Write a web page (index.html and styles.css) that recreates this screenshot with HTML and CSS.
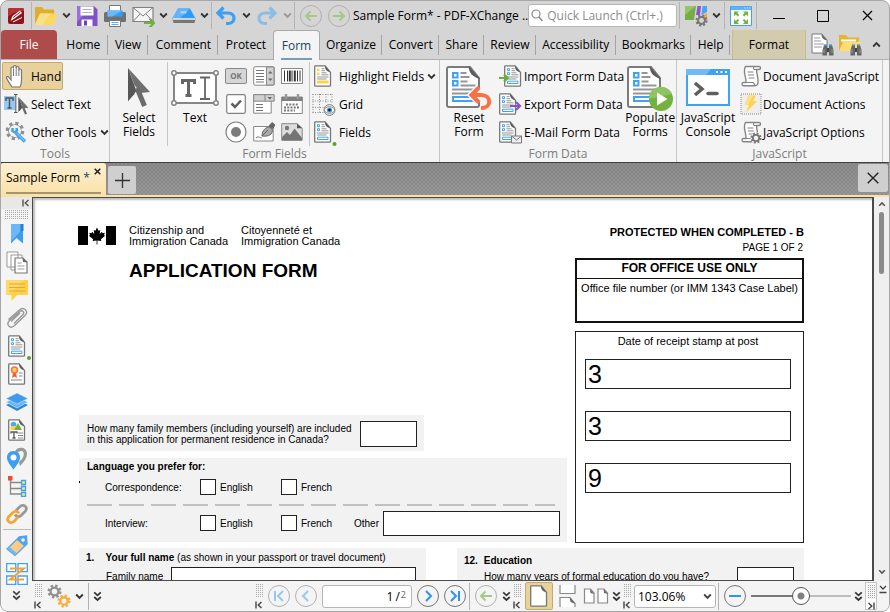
FILE: index.html
```html
<!DOCTYPE html>
<html lang="en">
<head>
    <meta charset="UTF-8">
    <meta name="viewport" content="width=device-width, initial-scale=1.0">
    <title>Sample Form* - PDF-XChange</title>
    <link rel="stylesheet" href="styles.css">
</head>
<body>
    <!-- Shared icons -->
    <svg class="sprite" aria-hidden="true">
        <symbol id="chevron" viewBox="0 0 9 7"><path d="M1.2 1.5l3.3 3.3 3.3-3.3" fill="none" stroke="currentColor" stroke-width="1.9"/></symbol>
        <symbol id="double" viewBox="0 0 9 11"><path d="M1.2 1.3l3.3 3 3.3-3M1.2 6l3.3 3 3.3-3" fill="none" stroke="currentColor" stroke-width="1.7"/></symbol>
        <symbol id="collapse" viewBox="0 0 8 8"><path d="M1 .5v7M6.5 1L3.2 4l3.3 3" fill="none" stroke="currentColor" stroke-width="1.4"/></symbol>
        <symbol id="doc" viewBox="0 0 22 22">
            <path d="M3.5.8h9.7l5.3 6.6v13.1q0 .7-.7.7H3.5q-.8 0-.8-.7V1.5q0-.7.8-.7z" fill="#fff" stroke="#777" stroke-width="1.3"/>
            <path d="M12.8.6c.2 4 2 6 5.7 7z" fill="#5c5c5c"/>
        </symbol>
        <symbol id="form" viewBox="0 0 22 22">
            <use href="#doc"/>
            <path d="M5.5 3.7h2v2h-2zM5.5 7.7h2v2h-2zM5.5 16.2H16v2.3H5.5z" fill="#fff" stroke="#3fa3f4"/>
            <path d="M9.5 3.7h3M9.5 5.7H13M9.5 7.8h5M9.5 9.8h7M5 12h11.5M5 14h9.5" stroke="#959595"/>
        </symbol>
        <!-- Larger form page for the tall ribbon buttons -->
        <symbol id="form-big" viewBox="0 0 36 44">
            <path d="M3 2h21l9 11v27q0 2-2 2H3q-2 0-2-2V4q0-2 2-2z" fill="#fff" stroke="#7b7b7b" stroke-width="2"/>
            <path d="M22.5 1c.5 7 4 11 11.5 13z" fill="#5c5c5c"/>
            <path d="M7 8h4.5v4.5H7zM7 16h4.5v4.5H7zM7 32h20v4H7z" fill="#fff" stroke="#3fa3f4" stroke-width="2"/>
            <path d="M14.5 8h6M14.5 12h9M14.5 16.5h7M14.5 20.5h15M6 24.5h24M6 28.5h20" stroke="#959595" stroke-width="1.8"/>
        </symbol>
        <symbol id="gear" viewBox="0 0 22 22">
            <circle cx="11" cy="11" r="8.5" fill="none" stroke="currentColor" stroke-width="3.5" stroke-dasharray="3.5 3.176"/>
            <circle cx="11" cy="11" r="5.8" fill="none" stroke="currentColor" stroke-width="3.4"/>
        </symbol>
        <symbol id="scroll" viewBox="0 0 22 22">
            <path d="M6 1.5h13c2 0 2 3 0 3h-2.5c0 5 2 8 1.5 13-.2 2-1.5 3.2-3 3.2H3.5c-2 0-2-3.2 0-3.2H6c.5-4-2-8-1.5-12.5C4.7 2.5 5 1.5 6 1.5z" fill="#fff" stroke="#858585" stroke-width="1.4"/>
            <path d="M16.5 4.5h-2c-1-.3-1.3-1.5-.5-3M6 17.5h7c1.5.5 1.3 2.5 2 3.2M7.5 7h6M8 10h6M8.5 13h6" fill="none" stroke="#858585" stroke-width="1.2"/>
        </symbol>
        <symbol id="binoculars" viewBox="0 0 12 12">
            <path d="M2 1h3v10.5H.5V6zM10 1H7v10.5h4.5V6z" fill="#666"/><path d="M5 4h2v4H5z" fill="#444"/><path d="M2 1h3M7 1h3" stroke="#44a3ee" stroke-width="1.5"/><path d="M2 5v4M10 5v4" stroke="#999"/>
        </symbol>
        <symbol id="arrow" viewBox="0 0 22 22"><path d="M17 11H6M10.5 6.5L6 11l4.5 4.5" fill="none" stroke="currentColor" stroke-width="2"/></symbol>
        <symbol id="cursor" viewBox="0 0 24 40"><path d="M1 0v33l6.5-7z" fill="#4e4e4e"/><path d="M1 0l22 24-9.5 1-6-8z" fill="#707070"/><path d="M1 0l8.5 23L1 33z" fill="#575757"/><path d="M10 20l7.5 18" stroke="#6b6b6b" stroke-width="5"/></symbol>
    </svg>

    <div class="app">
        <header class="titlebar">
            <button class="tool app-button" aria-label="PDF-XChange">
                <svg width="16" height="16" viewBox="0 0 16 16"><rect width="16" height="16" rx="2" fill="#8f1218"/><path d="M0 9V2q0-2 2-2h12q2 0 2 2v1C10 3 4 5 0 9z" fill="#bb3038"/><path d="M2.5 13l2-5L12 2.5l2 2.5-7.500 5.500z" fill="#fff"/><path d="M5 9.500L12.500 4M4 14l10-5.500" fill="none" stroke="#9a1c22"/><path d="M5 14l9-4.500" stroke="#fff"/></svg>
            </button>
            <span class="sep"></span>
            <button class="tool" aria-label="Open">
                <svg width="24" height="20" viewBox="0 0 24 20"><path d="M1 19V2q0-1 1-1h6l2 2.500h10V8z" fill="#dfae31"/><path d="M1 19l5-11.500h17L19.500 19z" fill="#ffd75b"/><path d="M1 19l5-11.500h11L8 19z" fill="#fbe08a"/></svg>
            </button>
            <button class="drop" aria-label="Open options"><svg width="9" height="7"><use href="#chevron"/></svg></button>
            <button class="tool" aria-label="Save">
                <svg width="22" height="22" viewBox="0 0 22 22"><path d="M1 1h17l3.500 3.500V21H1z" fill="#8152c4"/><path d="M1 1h16L1 17z" fill="#9a72d6"/><path d="M4.500 1.500h13v9h-13z" fill="#fff"/><path d="M6.500 4.500h9M6.500 7.500h9" stroke="#b9a5dc"/><path d="M5.500 14.500h11V21h-11z" fill="#fff"/><path d="M8 15.500h3v5H8z" fill="#6e46aa"/></svg>
            </button>
            <button class="tool" aria-label="Print">
                <svg width="22" height="22" viewBox="0 0 22 22"><rect y="7" width="22" height="10" rx="1.5" fill="#707070"/><path d="M5.500.5h11V8h-11zM5.500 15.500h11v6h-11z" fill="#fff" stroke="#777"/><path d="M3.500 5.500h15v6h-15z" fill="#2fa0f7"/><path d="M3.500 5.500h15L8 11.500H3.500z" fill="#6db9f7"/><path d="M7.500 17.500h7M7.500 19.500h7" stroke="#61aef0"/></svg>
            </button>
            <button class="tool" aria-label="E-mail">
                <svg width="23" height="22" viewBox="0 0 23 22"><path d="M1 2.500h20v14H1z" fill="#f5f5f5" stroke="#808080" stroke-width="1.2"/><path d="M1 2.500l10 8.500 10-8.500M1 16.500l7-7.500M21 16.500L14 9" fill="none" stroke="#808080"/><path d="M12 18h9M17.500 13.500L22 18l-4.500 4.500" fill="none" stroke="#70b03b" stroke-width="2.2"/></svg>
            </button>
            <button class="drop" aria-label="E-mail options"><svg width="9" height="7"><use href="#chevron"/></svg></button>
            <button class="tool" aria-label="Scan">
                <svg width="24" height="18" viewBox="0 0 24 18"><path d="M6 1.500h12l5.500 10H.5z" fill="#2d9cf4"/><path d="M6 1.500h12L8 11.500H.5z" fill="#62b3f7"/><path d="M9 4h6l-1 2.500H8z" fill="#a3d2fa"/><path d="M.5 11.500h23l-1 4.500h-21z" fill="#777"/><path d="M1 12h22" stroke="#eee" stroke-width="1.5"/></svg>
            </button>
            <button class="drop" aria-label="Scan options"><svg width="9" height="7"><use href="#chevron"/></svg></button>
            <span class="sep"></span>
            <button class="tool" aria-label="Undo">
                <svg width="22" height="20" viewBox="0 0 22 20"><path d="M8.500 1.500L3 7l5.500 5.500M3.500 7H13c8 0 8 10.500 0 10.500h-2" fill="none" stroke="#3b9ff2" stroke-width="3.2"/></svg>
            </button>
            <button class="drop" aria-label="Undo options"><svg width="9" height="7"><use href="#chevron"/></svg></button>
            <button class="tool" aria-label="Redo">
                <svg width="22" height="20" viewBox="0 0 22 20"><path d="M13.500 1.500L19 7l-5.500 5.500M18.500 7H9C1 7 1 17.500 9 17.500h2" fill="none" stroke="#8dbde6" stroke-width="3.2"/></svg>
            </button>
            <button class="drop faded" aria-label="Redo options"><svg width="9" height="7"><use href="#chevron"/></svg></button>
            <span class="sep"></span>
            <div class="history">
                <button class="round green" aria-label="Back"><svg width="22" height="22"><use href="#arrow"/></svg></button>
                <button class="round green" aria-label="Forward"><svg class="flip" width="22" height="22"><use href="#arrow"/></svg></button>
            </div>
            <div class="window-title">Sample Form* - PDF-XChange ..</div>
            <label class="search">
                <svg width="12" height="13" viewBox="0 0 12 13"><circle cx="5" cy="5" r="4" fill="none" stroke="#888" stroke-width="1.2"/><path d="M8 8l3.500 4" stroke="#888" stroke-width="1.5"/></svg>
                <input type="text" placeholder="Quick Launch (Ctrl+.)" aria-label="Quick Launch">
            </label>
            <span class="sep"></span>
            <div class="title-tools">
                <button class="tool" aria-label="UI options">
                    <svg width="24" height="22" viewBox="0 0 24 22"><path d="M1 1h11l-2 14H1z" fill="#76ad47"/><path d="M1 1h11L1 10z" fill="#93c569"/><path d="M13.500 1H17l-1 9h-4z" fill="#8b55cf"/><path d="M18.500 1H23v6l-5.500 3z" fill="#4aa4f2"/><path d="M17 12l6-4v7z" fill="#f8a43c"/><svg x="11" y="9" width="13" height="13" color="#777"><use href="#gear"/></svg></svg>
                </button>
                <button class="drop" aria-label="UI options menu"><svg width="9" height="7"><use href="#chevron"/></svg></button>
            </div>
            <span class="sep"></span>
            <div class="title-tools">
                <button class="tool" aria-label="Full screen">
                    <svg width="22" height="20" viewBox="0 0 22 20"><path d="M.5.5h21v19H.5z" fill="#fff" stroke="#3fa3f4"/><path d="M1 .5h20V4H1z" fill="#5eb2f6"/><path d="M14.500 2h1M17 2h1M19.500 2h1" stroke="#fff"/><path d="M4 5.500h5L7.300 7l2 2-1.500 1.500-2-2L4 10.500zM18 5.500h-5L14.700 7l-2 2 1.500 1.500 2-2 1.800 2zM4 18h5l-1.700-1.700 2-2-1.500-1.300-2 2L4 13zM18 18h-5l1.700-1.700-2-2 1.500-1.300 2 2L18 13z" fill="#72b23d"/></svg>
                </button>
            </div>
            <span class="sep"></span>
            <div class="window-buttons">
                <button aria-label="Minimize"><svg width="12" height="12"><path d="M0 8.500h12" stroke="#000"/></svg></button>
                <button aria-label="Maximize"><svg width="12" height="12"><path d="M.5.5h11v11H.5z" fill="none" stroke="#000"/></svg></button>
                <button aria-label="Close"><svg width="11" height="11"><path d="M1 1l9 9M10 1l-9 9" stroke="#000" stroke-width="1.2"/></svg></button>
            </div>
        </header>

        <nav class="tabs">
            <button class="file-tab">File</button>
            <button class="roomy">Home</button>
            <button class="roomy">View</button>
            <button class="roomy">Comment</button>
            <button class="roomy last">Protect</button>
            <button class="roomy active"><span>Form</span></button>
            <button>Organize</button>
            <button>Convert</button>
            <button>Share</button>
            <button>Review</button>
            <button>Accessibility</button>
            <button>Bookmarks</button>
            <button>Help</button>
            <button class="format-tab">Format</button>
            <div class="tab-tools">
                <button class="tool" aria-label="Find">
                    <svg width="24" height="23" viewBox="0 0 24 23"><path d="M2 1h10l5 6v13H2z" fill="#fff" stroke="#777"/><path d="M11.500 1c0 4 2 6 5.500 6z" fill="#666"/><path d="M4 5h6M4 8h7M4 11h10M4 14h8" stroke="#999"/><svg x="12" y="11" width="12" height="12"><use href="#binoculars"/></svg></svg>
                </button>
                <button class="tool" aria-label="Search in folder">
                    <svg width="24" height="23" viewBox="0 0 24 23"><path d="M1 18V2h7l2 2.500h11V8z" fill="#e7b432"/><path d="M3 7.500h15" stroke="#fff" stroke-width="2"/><path d="M1 18L5 9h18l-3 9z" fill="#ffdd74"/><svg x="12" y="11" width="12" height="12"><use href="#binoculars"/></svg></svg>
                </button>
                <button class="drop" aria-label="Collapse ribbon"><svg class="upside" width="9" height="7"><use href="#chevron"/></svg></button>
            </div>
        </nav>

        <section class="ribbon">
            <div class="group group-tools">
                <div class="group-body">
                    <div class="rows">
                        <button class="row-button selected">
                            <svg width="24" height="24" viewBox="-1 0 24 24"><path d="M7 23c-2-3-4-6-5.500-9-.5-1.500 1.500-2 2.500-.5L6 16V4.500c0-2 2.500-2 2.500 0V3c0-2 2.700-2 2.700 0v1c0-2 2.700-2 2.700 0v2.500c0-2 2.600-2 2.600 0V16c0 3-.5 5-1.500 7z" fill="#fff" stroke="#777" stroke-width="1.2"/><path d="M8.500 5v7M11.200 4v8M13.900 6v6" stroke="#777"/></svg>
                            Hand
                        </button>
                        <button class="row-button">
                            <svg width="24" height="22" viewBox="0 0 24 22"><path d="M0 3h11v14H0z" fill="#92caf8"/><path d="M2 8V5h7v3M5.500 5v10M3.500 15h4" fill="none" stroke="#555" stroke-width="1.5"/><path d="M10 1.500h3.500M10 19.500h3.500M11.800 1.500v18" stroke="#555"/><svg x="14" y="4" width="11" height="18"><use href="#cursor"/></svg></svg>
                            Select Text
                        </button>
                        <button class="row-button">
                            <svg width="24" height="24" viewBox="0 0 24 24"><svg x="1" y="1" width="20" height="20" color="#8f8f8f"><use href="#gear"/></svg><circle cx="11" cy="11" r="6" fill="#f4f4f4"/><path d="M12 13l9 8.500" stroke="#3fa3f4" stroke-width="3.5"/><path d="M13 13.500l7.500 7.500" stroke="#a8d4fb"/><path d="M8.500 8v3l2.500 1.500 2-2L12.500 8" fill="none" stroke="#3fa3f4" stroke-width="2.5"/></svg>
                            Other Tools
                            <svg class="menu-mark" width="9" height="7"><use href="#chevron"/></svg>
                        </button>
                    </div>
                </div>
                <div class="group-label">Tools</div>
            </div>

            <div class="group group-fields">
                <div class="group-body">
                    <button class="big-button">
                        <svg width="24" height="42"><use href="#cursor"/></svg>
                        <span>Select<br>Fields</span>
                    </button>
                    <span class="divider"></span>
                    <button class="big-button text-field">
                        <svg width="48" height="42" viewBox="0 0 48 42"><rect x="3" y="6" width="42" height="30" fill="#fff" stroke="#858585" stroke-width="2"/><g fill="#fff" stroke="#858585" stroke-width="1.5"><circle cx="3" cy="6" r="2.2"/><circle cx="45" cy="6" r="2.2"/><circle cx="3" cy="36" r="2.2"/><circle cx="45" cy="36" r="2.2"/></g><path d="M11.500 17v-3.500h12V17M17.500 14v14.500M14.500 28.500h6" fill="none" stroke="#666" stroke-width="3"/><path d="M29 10.500h10M29 32h10M34 10.500V32" stroke="#666" stroke-width="1.8"/></svg>
                        <span>Text</span>
                    </button>
                    <div class="mini-grid">
                        <button aria-label="Button"><svg width="22" height="16" viewBox="0 0 22 16"><rect x=".5" y=".5" width="21" height="15" rx="1.5" fill="#d6d6d6" stroke="#888"/><text class="ok-text" x="11" y="11" text-anchor="middle">OK</text></svg></button>
                        <button aria-label="List box"><svg width="22" height="20" viewBox="0 0 22 20"><rect x=".7" y=".7" width="20.5" height="18.5" rx="1.5" fill="#fff" stroke="#888"/><path d="M13.500 1H21v18h-7.500z" fill="#d0d0d0" stroke="#888"/><path d="M3 4.500h8M3 7.500h8M3 10.500h8M3 13.500h8M3 16h8" stroke="#777"/><path d="M15 7.500L17.300 5l2.300 2.500zM15 12.500l2.300 2.500 2.300-2.500z" fill="#666"/></svg></button>
                        <button aria-label="Barcode"><svg width="22" height="16" viewBox="0 0 22 16"><rect x=".5" y=".5" width="21" height="15" fill="#fff" stroke="#888"/><path d="M3.500 2.500v11M6.500 2.500v11M11 2.500v11M16.500 2.500v11M19 2.500v11" stroke="#333"/><path d="M8.800 2.500v11M13.800 2.500v11" stroke="#333" stroke-width="2"/></svg></button>
                        <button aria-label="Check box"><svg width="20" height="20" viewBox="0 0 20 20"><rect x=".7" y=".7" width="18.6" height="18.6" rx="1.5" fill="#fff" stroke="#808080" stroke-width="1.2"/><path d="M5.500 9.500L9 13l6-6.500" fill="none" stroke="#606060" stroke-width="2.5"/></svg></button>
                        <button aria-label="Dropdown"><svg width="22" height="20" viewBox="0 0 22 20"><path d="M.7.7h17.500v18.500H.7z" fill="#fff" stroke="#888"/><path d="M.7.7h20.500v6.500H.7z" fill="#d0d0d0" stroke="#888"/><path d="M12 .7v6.500" stroke="#888"/><path d="M14.500 3l2.300 2.500L19 3z" fill="#666"/><path d="M3 10.500h7M3 13.500h7M3 16.500h7" stroke="#777"/></svg></button>
                        <button aria-label="Date"><svg width="22" height="20" viewBox="0 0 22 20"><path d="M.7 3h20.600v16.500H.7z" fill="#fff" stroke="#888"/><path d="M.5 3h21v4H.5z" fill="#808080"/><path d="M5 0v5M17 0v5" stroke="#999" stroke-width="2.5"/><path d="M5 10.500h13M3 13.500h15M3 16.500h11" stroke="#777" stroke-width="1.8" stroke-dasharray="2 1.25"/></svg></button>
                        <button aria-label="Radio button"><svg width="22" height="22"><circle cx="11" cy="11" r="10" fill="#fff" stroke="#808080" stroke-width="1.2"/><circle cx="11" cy="11" r="5" fill="#7c7c7c"/></svg></button>
                        <button aria-label="Signature"><svg width="22" height="20" viewBox="0 0 22 20"><path d="M.7 4.500h19.500v14.500H.7z" fill="#fff" stroke="#888"/><path d="M3 16c3-3 4 1 6-.5" fill="none" stroke="#777"/><path d="M9 14c0-6 4-9 7.500-9l3 3c0 4-3.500 7-10.500 6z" fill="#aaa" stroke="#666"/><path d="M9 14l6-6M16 4l3-3.500L22 3l-2.500 4z" fill="#666" stroke="#666"/></svg></button>
                        <button aria-label="Image"><svg width="22" height="18" viewBox="0 0 22 18"><path d="M.7.7h15.500l5 4.500v12H.7z" fill="#ddd" stroke="#888"/><circle cx="6" cy="5" r="2.2" fill="#777"/><path d="M1 14l5-5 3 3 4.500-6.500L21 15v2.500H1z" fill="#747474"/><path d="M16 .7l5 4.500h-5z" fill="#555"/></svg></button>
                    </div>
                    <span class="divider"></span>
                    <div class="rows">
                        <button class="row-button">
                            <svg width="24" height="22" viewBox="0 0 24 22"><use href="#doc" width="22" height="22"/><path d="M5 3.500h2.500V6H5zM5 7.500h2.500V10H5zM5 15.500h11.500v3H5z" fill="#ffd24a"/><path d="M9.500 3.700h3M9.500 5.700H13M9.500 7.800h5M9.500 9.800h7M5 12h11.500M5 14h9.500" stroke="#959595"/></svg>
                            Highlight Fields
                            <svg class="menu-mark" width="9" height="7"><use href="#chevron"/></svg>
                        </button>
                        <button class="row-button">
                            <svg width="24" height="23" viewBox="0 0 24 23"><path d="M.5 1.500h20M.5 8h20M.5 14.500h12M.5 19.500h12M1 1v19M7.500 1v19M14 1v10M20 1v10" stroke="#888" stroke-dasharray="1 1.5"/><circle cx="17.5" cy="17" r="5.5" fill="#ddd" stroke="#888"/><ellipse cx="17.5" cy="17" rx="5" ry="3.2" fill="#fff" stroke="#777" stroke-width=".7"/><circle cx="17.5" cy="17" r="2.6" fill="#3b9cec"/><circle cx="17.5" cy="17" r="1.3" fill="#111"/></svg>
                            Grid
                        </button>
                        <button class="row-button">
                            <svg class="over" width="24" height="22" viewBox="0 0 24 22"><use href="#form" width="22" height="22"/><circle cx="22.5" cy="23" r="2" fill="#5aa02c"/></svg>
                            Fields
                        </button>
                    </div>
                </div>
                <div class="group-label">Form Fields</div>
            </div>

            <div class="group group-data">
                <div class="group-body">
                    <button class="big-button">
                        <svg width="46" height="46" viewBox="0 0 46 46"><use href="#form-big" width="36" height="44"/><path d="M33 22.500L25.500 30l7.500 7.500M26 30h9c11 0 11 13 0 13" fill="none" stroke="#f4f4f4" stroke-width="7"/><path d="M33 22.500L25.500 30l7.500 7.500M26 30h9c11 0 11 13 0 13" fill="none" stroke="#fc6f42" stroke-width="4"/></svg>
                        <span>Reset<br>Form</span>
                    </button>
                    <div class="rows">
                        <button class="row-button">
                            <svg width="24" height="22" viewBox="0 0 24 22"><use href="#form" x="3" width="22" height="22"/><path d="M0 13h8M5 9.500L8.800 13 5 16.500" fill="none" stroke="#6fae38" stroke-width="2.2"/></svg>
                            Import Form Data
                        </button>
                        <button class="row-button">
                            <svg width="24" height="22" viewBox="0 0 24 22"><use href="#form" x="-2" width="22" height="22"/><path d="M11 13h9M17 9l4 4-4 4" fill="none" stroke="#8455c9" stroke-width="2.2"/></svg>
                            Export Form Data
                        </button>
                        <button class="row-button">
                            <svg width="24" height="24" viewBox="0 0 24 24"><use href="#form" x="-2" y="1" width="22" height="22"/><path d="M12.500 16h10v7h-10z" fill="#eee" stroke="#777"/><path d="M12.500 16l5 4 5-4" fill="none" stroke="#777"/></svg>
                            E-Mail Form Data
                        </button>
                    </div>
                    <button class="big-button populate">
                        <svg width="46" height="46" viewBox="0 0 46 46"><use href="#form-big" width="36" height="44"/><circle cx="34" cy="34" r="12" fill="#72b23d"/><path d="M22 34a12 12 0 0 1 23-5z" fill="#8fc465"/><path d="M30 27.500v13l10.500-6.500z" fill="#fff"/></svg>
                        <span>Populate<br>Forms</span>
                    </button>
                </div>
                <div class="group-label">Form Data</div>
            </div>

            <div class="group group-script">
                <div class="group-body">
                    <button class="big-button console">
                        <svg width="44" height="42" viewBox="0 0 44 42"><path d="M1 3h42v35H1z" fill="#fff" stroke="#3fa3f4" stroke-width="2"/><path d="M0 2h44v6H0z" fill="#3fa3f4"/><path d="M0 2h25l-5 6H0z" fill="#6fbaf7"/><path d="M30 5h2M34.500 5h2M39 5h2" stroke="#fff" stroke-width="2"/><path d="M9 16l7 6-7 6" fill="none" stroke="#5f5f5f" stroke-width="3.5"/><path d="M22 26.500h9" stroke="#5f5f5f" stroke-width="3.5" stroke-linecap="round"/></svg>
                        <span>JavaScript<br>Console</span>
                    </button>
                    <div class="rows">
                        <button class="row-button">
                            <svg width="22" height="22"><use href="#scroll"/></svg>
                            Document JavaScript
                        </button>
                        <button class="row-button">
                            <svg width="22" height="22" viewBox="0 0 22 22"><path d="M1 1h20v20H1z" fill="#eee" stroke="#888" stroke-dasharray="1 1"/><path d="M8 2.500h8L13 8h4L6 19.500 9 12H5z" fill="#ffd24f"/><path d="M8 2.500h5L8 12H5z" fill="#ffe182"/></svg>
                            Document Actions
                        </button>
                        <button class="row-button">
                            <svg width="22" height="24" viewBox="0 0 22 24"><use href="#scroll" y="1" width="22" height="22"/><circle cx="16.5" cy="18" r="6" fill="#f4f4f4"/><svg x="10" y="12" width="12" height="12" color="#777"><use href="#gear"/></svg></svg>
                            JavaScript Options
                        </button>
                    </div>
                </div>
                <div class="group-label">JavaScript</div>
            </div>
        </section>

        <div class="documents">
            <div class="doc-tab">
                <button class="doc-name">Sample Form <span>*</span></button>
                <button class="doc-close" aria-label="Close tab"><svg width="7" height="7"><path d="M.7.7l5.600 5.600M6.300.7L.7 6.300" stroke="#222" stroke-width="1.5"/></svg></button>
            </div>
            <button class="square" aria-label="New tab"><svg width="15" height="15"><path d="M7.500 0v15M0 7.500h15" stroke="#333" stroke-width="1.3"/></svg></button>
            <button class="square close-all" aria-label="Close document"><svg width="12" height="12"><path d="M.7.7l10.600 10.600M11.300.7L.7 11.300" stroke="#222" stroke-width="1.4"/></svg></button>
        </div>

        <div class="work">
            <aside class="side">
                <button class="side-top" aria-label="Collapse pane"><svg width="8" height="8"><use href="#collapse"/></svg></button>
                <span class="grip wide"></span>
                <button aria-label="Bookmarks"><svg width="16" height="22" viewBox="0 0 16 22"><path d="M2 1h12v19.500L7.500 15 2 20.500z" fill="#3a9df2"/><path d="M2 1h9v8l-9 9z" fill="#6cb8f7"/><path d="M12 1h2.500v7H12z" fill="#2f7fc6"/></svg></button>
                <button aria-label="Thumbnails"><svg width="22" height="23" viewBox="0 0 22 23"><path d="M1 1h11v15H1zM5 4h11v15H5z" fill="#fff" stroke="#999"/><path d="M9 7h8l4 4v11H9z" fill="#fff" stroke="#777" stroke-width="1.2"/><path d="M16.500 7l4.500 4.500-4-.5z" fill="#666"/><path d="M11.500 12h4M11.500 15h7M11.500 18h7" stroke="#999"/></svg></button>
                <button aria-label="Comments"><svg width="22" height="21" viewBox="0 0 22 21"><path d="M1 0h20q1 0 1 1v13q0 1-1 1H11l-5.500 6v-6H1q-1 0-1-1V1q0-1 1-1z" fill="#ffcf45"/><path d="M1 0h17L3 15H1q-1 0-1-1V1q0-1 1-1z" fill="#ffd968"/><path d="M3 4h16M3 7.500h16M3 11h16" stroke="#dda93a"/></svg></button>
                <button aria-label="Attachments"><svg width="23" height="22" viewBox="0 0 23 22"><path d="M9 16.500l9-9c2-2.500-1-5-3-3L4 14c-3 4 1 8 5 5L20 8.500c4-4-1-9-5-6L3.500 12.500M6 14.500L15 6" fill="none" stroke="#999" stroke-width="1.4"/></svg></button>
                <button aria-label="Fields"><svg class="over" width="22" height="22" viewBox="0 0 22 22"><use href="#form"/><circle cx="23" cy="23" r="2" fill="#5aa02c"/></svg></button>
                <button aria-label="Signatures"><svg width="22" height="22" viewBox="0 0 22 22"><use href="#doc"/><path d="M7 10l-1 5 2.500-1.500L11 15l-1-5z" fill="#ea5f35"/><circle cx="8.5" cy="7" r="3" fill="#ffd04c" stroke="#fa6e43" stroke-width="1.5"/><path d="M13 10h3.500M13 13h3.500M5 17h11" stroke="#888"/></svg></button>
                <button aria-label="Layers"><svg width="24" height="20" viewBox="0 0 24 20"><path d="M12 8l11 5-11 6-11-6z" fill="#2d87d3"/><path d="M12 5l11 5-11 6-11-6z" fill="#67b7f8" stroke="#f4f4f4" stroke-width=".5"/><path d="M12 1l11 5.500-11 5.500L1 6.500z" fill="#3c9bea" stroke="#f4f4f4" stroke-width=".5"/></svg></button>
                <button aria-label="Content"><svg width="22" height="22" viewBox="0 0 22 22"><use href="#doc"/><circle cx="7.5" cy="5.5" r="2.8" fill="#4da8f0"/><path d="M4.500 7h5v4h-5z" fill="#ffd04c"/><path d="M12 4l4 7H8z" fill="#72b23d"/><path d="M5 14.500V13h6v1.500M8 13v6M6.500 19h3" fill="none" stroke="#555" stroke-width="1.3"/><path d="M12 14h5M12 16.500h5M12 19h5" stroke="#888"/></svg></button>
                <button aria-label="Destinations"><svg width="22" height="23" viewBox="0 0 22 23"><path d="M9 5c1-6 12-6 12 1.500C21 11 18 15 14 19l-1-4 3-3c2-3 3-8-1-8-2 0-3 1-4 2z" fill="#999"/><path d="M7.500 4C3 4 1 7 1 10.500 1 15 5 19 7.500 22.500 10 19 14 15 14 10.500 14 7 12 4 7.500 4z" fill="#3b9ff2"/><circle cx="7.5" cy="10.5" r="3" fill="#fff"/></svg></button>
                <button aria-label="Structure"><svg width="20" height="22" viewBox="0 0 20 22"><path d="M3.500 4v15H14M3.500 7.500H14M3.500 13.500H14" fill="none" stroke="#888" stroke-width="1.3"/><path d="M1 1h4.500v4.500H1z" fill="#e94f2d"/><g fill="#ffe36e" stroke="#3fa3f4" stroke-width="1.3"><path d="M14.500 5.500h4v4h-4zM14.500 11.500h4v4h-4zM14.500 17.500h4v4h-4z"/></g></svg></button>
                <button aria-label="Links"><svg width="22" height="22" viewBox="0 0 22 22"><path d="M10 7.500l4-4c4-3 8 1 5.500 4.500L15 12.500c-2 2-5 1-6-1" fill="none" stroke="#999" stroke-width="2.8"/><path d="M12 14l-4 4.500c-4 3-8-1-5.500-4.500L7 9.500c2-2 5-1 6 1" fill="none" stroke="#fba52f" stroke-width="2.8"/></svg></button>
                <span class="side-line"></span>
                <button aria-label="Tags"><svg width="22" height="22" viewBox="0 0 22 22"><path d="M13 2l7.500-1 .5 8L9 20.500 1 14z" fill="#fbcb86" stroke="#4ba5ee" stroke-width="1.3"/><path d="M13 2l7.500-1 .5 8-3 2-7-6z" fill="#4ba5ee"/><path d="M1 14l8 6.500 2-2-8-7z" fill="#6cb8f7"/><circle cx="17" cy="5" r="1.8" fill="#fff"/></svg></button>
                <button aria-label="Order"><svg width="22" height="22" viewBox="0 0 22 22"><path d="M.7.7h9v8h-9zM12 .7h9.300v8H12zM.7 13h9v8.300h-9zM12 13h9.300v8.300H12z" fill="#fff" stroke="#3fa3f4" stroke-width="1.3"/><path d="M4 5.500h14L4 16.500h14" fill="none" stroke="#f9a02d" stroke-width="2"/></svg></button>
                <button class="side-more" aria-label="More panes"><svg width="9" height="11"><use href="#double"/></svg></button>
            </aside>

            <div class="main">
                <div class="view">
                    <form class="page">
                        <div class="page-left">
                            <div class="agency">
                                <svg width="38" height="19" viewBox="0 0 38 19"><path d="M0 0h38v19H0z" fill="#fff"/><path d="M0 0h10v19H0zM28 0h10v19H28z"/><path d="M19 1.500l1.600 3.200 1.700-.8-.6 4 2.200-2.200.7 1.500 2.200-.5-.8 2.500 1.200.6-4.300 3.500.4 1.700-3.900-.5v4h-.8v-4l-3.900.5.4-1.700L10.800 9.800l1.200-.6-.8-2.500 2.200.5.7-1.500 2.200 2.200-.6-4 1.700.8z"/></svg>
                                <p>Citizenship and<br>Immigration Canada</p>
                                <p>Citoyenneté et<br>Immigration Canada</p>
                            </div>
                            <h1>APPLICATION FORM</h1>
                            <div class="box family">
                                <label for="members">How many family members (including yourself) are included<br>in this application for permanent residence in Canada?</label>
                                <input class="field" id="members" type="text">
                            </div>
                            <div class="box language">
                                <h2>Language you prefer for:</h2>
                                <div class="choices">
                                    <span>Correspondence:</span>
                                    <label><input type="checkbox">English</label>
                                    <label><input type="checkbox">French</label>
                                </div>
                                <div class="dashes"></div>
                                <div class="choices">
                                    <span>Interview:</span>
                                    <label><input type="checkbox">English</label>
                                    <label><input type="checkbox">French</label>
                                    <label class="other">Other <input class="field" type="text"></label>
                                </div>
                            </div>
                        </div>
                        <div class="page-right">
                            <div class="protected">PROTECTED WHEN COMPLETED - B</div>
                            <div class="page-number">PAGE 1 OF 2</div>
                            <div class="office">
                                <h2>FOR OFFICE USE ONLY</h2>
                                <p>Office file number (or IMM 1343 Case Label)</p>
                            </div>
                            <div class="receipt">
                                <p>Date of receipt stamp at post</p>
                                <input class="field" type="text" value="3" aria-label="Stamp 1">
                                <input class="field" type="text" value="3" aria-label="Stamp 2">
                                <input class="field" type="text" value="9" aria-label="Stamp 3">
                            </div>
                        </div>
                        <div class="page-bottom">
                            <div class="box question">
                                <h2><b>1.</b> Your full name <span>(as shown in your passport or travel document)</span></h2>
                                <label>Family name <input class="field" type="text"></label>
                            </div>
                            <div class="box question education">
                                <h2><b>12.</b> Education</h2>
                                <label>How many years of formal education do you have? <input class="field" type="text"></label>
                            </div>
                        </div>
                    </form>
                    <div class="scrollbar">
                        <svg class="upside" width="8" height="6"><use href="#chevron"/></svg>
                        <span class="thumb"></span>
                        <svg class="down" width="8" height="6"><use href="#chevron"/></svg>
                    </div>
                </div>

                <footer class="status">
                    <div class="handle"><span class="grip"></span><svg width="8" height="8"><use href="#collapse"/></svg></div>
                    <button class="tool" aria-label="Options"><svg width="24" height="24" viewBox="0 0 24 24"><svg width="15" height="15" color="#909090"><use href="#gear"/></svg><svg x="10" y="10" width="14" height="14" color="#fba83a"><use href="#gear"/></svg></svg></button>
                    <button class="drop" aria-label="Options menu"><svg width="9" height="7"><use href="#chevron"/></svg></button>
                    <span class="sep"></span>
                    <button class="drop" aria-label="More"><svg width="9" height="11"><use href="#double"/></svg></button>
                    <div class="handle push"><span class="grip"></span><svg width="8" height="8"><use href="#collapse"/></svg></div>
                    <div class="pager">
                        <button class="round off" aria-label="First page"><svg width="12" height="12"><path d="M2 1v10M10 1L5 6l5 5" fill="none" stroke="currentColor" stroke-width="2"/></svg></button>
                        <button class="round off" aria-label="Previous page"><svg width="12" height="12"><path d="M8 1L3 6l5 5" fill="none" stroke="currentColor" stroke-width="2"/></svg></button>
                        <label class="page-box"><input type="text" value="1" aria-label="Page">/<sup>2</sup></label>
                        <button class="round" aria-label="Next page"><svg width="12" height="12"><path d="M4 1l5 5-5 5" fill="none" stroke="currentColor" stroke-width="2"/></svg></button>
                        <button class="round" aria-label="Last page"><svg width="12" height="12"><path d="M10 1v10M2 1l5 5-5 5" fill="none" stroke="currentColor" stroke-width="2"/></svg></button>
                    </div>
                    <span class="sep"></span>
                    <button class="round green back" aria-label="Previous view"><svg width="22" height="22"><use href="#arrow"/></svg></button>
                    <button class="drop" aria-label="More"><svg width="9" height="11"><use href="#double"/></svg></button>
                    <div class="handle"><span class="grip"></span><svg width="8" height="8"><use href="#collapse"/></svg></div>
                    <button class="tool selected" aria-label="Single page"><svg width="22" height="22"><use href="#doc"/></svg></button>
                    <button class="tool" aria-label="Continuous"><svg width="18" height="22" viewBox="0 0 18 22"><path d="M1 0v8.500h15V0M1 22v-9.500h10l5 6V22" fill="#fff" stroke="#888" stroke-width="1.2"/><path d="M10.500 12l6 7-5-2z" fill="#666"/></svg></button>
                    <button class="tool" aria-label="Two pages"><svg width="26" height="16" viewBox="0 0 26 16"><path d="M1.500 1h6L11 5v10H1.500zM15 1h6l3.500 4v10H15z" fill="#fff" stroke="#888" stroke-width="1.2"/><path d="M7 1l4 5-3.500-1zM20.500 1l4 5L21 5z" fill="#666"/></svg></button>
                    <button class="drop" aria-label="More"><svg width="9" height="11"><use href="#double"/></svg></button>
                    <div class="handle"><span class="grip"></span><svg width="8" height="8"><use href="#collapse"/></svg></div>
                    <div class="zoom-box">
                        <select aria-label="Zoom level"><option>103.06%</option></select>
                        <svg width="9" height="7"><use href="#chevron"/></svg>
                    </div>
                    <span class="sep"></span>
                    <button class="round minus" aria-label="Zoom out"><svg width="12" height="12"><path d="M0 6h12" stroke="currentColor" stroke-width="2"/></svg></button>
                    <input class="zoom" type="range" min="0" max="100" value="50" aria-label="Zoom">
                    <button class="drop" aria-label="More"><svg width="9" height="11"><use href="#double"/></svg></button>
                    <div class="handle end"><span class="grip"></span><svg class="flip" width="8" height="8"><use href="#collapse"/></svg></div>
                    <button class="to-end" aria-label="To the end"><svg width="8" height="9"><path d="M1 1l3 3 3-3M.5 7.500h7" fill="none" stroke="#444" stroke-width="1.3"/></svg></button>
                </footer>
            </div>
        </div>
    </div>
</body>
</html>
```
FILE: styles.css
```css
* {
    box-sizing: border-box;
}
body {
    margin: 0;
    background-color: #fff;
    font-family: "Open Sans", "Noto Sans", sans-serif;
    font-size: 12px;
    color: #000;
}
button, input, select {
    font: inherit;
    color: inherit;
}
button {
    margin: 0;
    padding: 0;
    border: none;
    background: none;
    cursor: pointer;
}
svg {
    flex: none;
    display: block;
}
p, h1, h2 {
    margin: 0;
}
.sprite {
    position: absolute;
    width: 0;
    height: 0;
}
.app {
    display: flex;
    flex-direction: column;
    height: 100vh;
    overflow: hidden;
    border: 1px solid #a6a6a6;
    border-radius: 8px;
    background-color: #d5d5d5;
}
.flip {
    transform: scaleX(-1);
}
.upside {
    transform: scaleY(-1);
}
.over {
    overflow: visible;
}

/* Title bar */
.titlebar {
    display: flex;
    height: 29px;
    flex: none;
    align-items: center;
}
.tool {
    display: flex;
    align-items: center;
    justify-content: center;
    width: 28px;
    height: 28px;
    flex: none;
}
.app-button {
    width: 30px;
}
.drop {
    display: flex;
    align-items: center;
    justify-content: center;
    width: 13px;
    height: 28px;
    flex: none;
    color: #333;
}
.faded {
    color: #999;
}
.sep {
    width: 1px;
    height: 27px;
    flex: none;
    background-color: #b3b3b3;
}
.history {
    display: flex;
    gap: 6px;
    padding: 0 3px 0 5px;
}
.round {
    display: flex;
    align-items: center;
    justify-content: center;
    width: 22px;
    height: 22px;
    flex: none;
    border: 1px solid #777;
    border-radius: 50%;
    color: #2f93ee;
}
.round.green {
    border-color: #b0b0b0;
    color: #a4c988;
}
.round.off {
    border-color: #b0b0b0;
    color: #94c8f5;
}
.window-title {
    flex: none;
    white-space: nowrap;
}
.search {
    display: flex;
    align-items: center;
    gap: 4px;
    flex: 1;
    height: 23px;
    margin-right: 2px;
    padding: 0 2px;
    border: 1px solid #b5b5b5;
    border-radius: 3px;
    background-color: #fff;
}
.search input {
    width: 100%;
    min-width: 0;
    padding: 0;
    border: none;
    outline: none;
    background: none;
}
.search input::placeholder {
    color: #8c8c8c;
}
.title-tools {
    display: flex;
    padding: 0 1px 0 2px;
}
.window-buttons {
    display: flex;
}
.window-buttons button {
    display: flex;
    align-items: center;
    justify-content: center;
    width: 44px;
    height: 28px;
}

/* Ribbon tabs */
.tabs {
    display: flex;
    height: 30px;
    flex: none;
    border-bottom: 1px solid #b0b0b0;
}
.tabs > button {
    position: relative;
    flex: 1 0 auto;
    padding: 0 6px;
    white-space: nowrap;
}
.tabs > .roomy {
    padding: 0 7px;
}
.tabs > button::after {
    content: "";
    position: absolute;
    top: 5px;
    right: 0;
    width: 1px;
    height: 20px;
    background-color: #a3a3a3;
}
.tabs > .file-tab {
    flex: none;
    width: 56px;
    margin-right: 2px;
    background-color: #ae4b4b;
    border-radius: 4px 4px 0 0;
    color: #fff;
}
.tabs > .file-tab::after, .tabs > .last::after, .tabs > .active::after, .tabs > .format-tab::after {
    display: none;
}
.tabs > .active {
    height: 30px;
    border: 1px solid #aaa;
    border-bottom: none;
    border-radius: 4px 4px 0 0;
    background-color: #f4f4f4;
    color: #1b4566;
}
.active span {
    display: block;
    height: 28px;
    line-height: 28px;
    border-bottom: 2px solid #7b9bb5;
}
.tabs > .format-tab {
    flex: none;
    width: 74px;
    margin-left: 2px;
    border: 1px solid #cabb8a;
    border-width: 0 1px;
    background-color: #d3cbae;
}
.tab-tools {
    display: flex;
    padding-left: 2px;
}
.tab-tools .drop {
    width: 25px;
}

/* Ribbon */
.ribbon {
    display: flex;
    flex: none;
    height: 103px;
    border-bottom: 1px solid #3f3f3f;
    background-color: #f4f4f4;
}
.group {
    display: flex;
    flex-direction: column;
    flex: none;
    border-right: 1px solid #c6c6c6;
}
.group-tools {
    width: 109px;
}
.group-fields {
    width: 330px;
}
.group-data {
    width: 237px;
}
.group-script {
    width: 206px;
}
.group-body {
    display: flex;
    height: 87px;
    padding: 2px 0 1px 1px;
}
.group-label {
    line-height: 14px;
    text-align: center;
    color: #7c7c7c;
}
.row-button {
    display: flex;
    align-items: center;
    gap: 3px;
    height: 28px;
    padding: 0 1px;
    border: 1px solid transparent;
    white-space: nowrap;
}
.group-data .row-button, .group-script .row-button {
    gap: 1px;
}
.selected {
    border: 1px solid #c5ab6a;
    border-radius: 2px;
    background-color: #e7d19d;
}
.menu-mark {
    color: #333;
}
.big-button {
    display: flex;
    flex-direction: column;
    align-items: center;
    width: 56px;
    flex: none;
    padding-top: 3px;
    line-height: 14px;
}
.big-button svg {
    height: 46px;
}
.text-field {
    width: 54px;
}
.populate {
    width: 48px;
}
.console {
    width: 60px;
}
.divider {
    width: 1px;
    height: 84px;
    background-color: #c6c6c6;
}
.mini-grid {
    display: grid;
    grid-template-columns: repeat(3, 28px);
    grid-template-rows: repeat(3, 28px);
    padding-right: 3px;
}
.mini-grid button {
    display: flex;
    align-items: center;
    justify-content: center;
}
.ok-text {
    font-size: 8px;
    font-weight: bold;
    fill: #777;
}

/* Open documents */
.documents {
    display: flex;
    align-items: flex-start;
    flex: none;
    height: 34px;
    border-bottom: 2px solid #fae0a4;
    background-image: linear-gradient(rgba(0, 0, 0, 0.08), rgba(0, 0, 0, 0)), repeating-conic-gradient(#8e8e8e 0 25%, #989898 0 50%);
    background-size: auto, 4px 4px;
}
.doc-tab {
    display: flex;
    width: 105px;
    height: 34px;
    padding: 0 5px;
    border-radius: 2px 3px 0 0;
    background-image: linear-gradient(#fdf0d0, #f9e0a6);
}
.doc-name {
    flex: 1;
    height: 31px;
    border-bottom: 2px solid #a59470;
    text-align: left;
    white-space: nowrap;
}
.doc-name span {
    color: #1b4566;
}
.doc-close {
    height: 31px;
    padding: 5px 0 19px;
    border-bottom: 2px solid #a59470;
}
.square {
    display: flex;
    align-items: center;
    justify-content: center;
    width: 28px;
    height: 28px;
    margin: 3px 0 0 2px;
    border-radius: 2px;
    background-color: #cfcfcf;
}
.close-all {
    width: 30px;
    margin: 1px 1px 0 auto;
}

/* Side panes */
.work {
    display: flex;
    flex: 1;
    min-height: 0;
}
.side {
    display: flex;
    flex-direction: column;
    align-items: center;
    width: 31px;
    flex: none;
    overflow: hidden;
    background-color: #f4f4f4;
}
.side button {
    display: flex;
    align-items: center;
    justify-content: center;
    width: 30px;
    height: 28px;
    flex: none;
}
.side .side-top {
    justify-content: flex-end;
    width: 31px;
    height: 12px;
    padding-right: 2px;
    background-color: #e8e8e8;
    color: #555;
}
.side .side-more {
    height: 14px;
    color: #444;
}
.side-line {
    width: 28px;
    height: 1px;
    flex: none;
    margin: 1px 0 2px;
    background-color: #bbb;
}
.grip {
    display: block;
    width: 9px;
    height: 15px;
    flex: none;
    background-image: linear-gradient(#f4f4f4 0 1px, transparent 1px), linear-gradient(90deg, #f4f4f4 0 1px, #a9a9a9 1px);
    background-size: 2px 2px;
}
.grip.wide {
    width: 25px;
    height: 10px;
    margin-bottom: 1px;
}

/* Page view */
.main {
    display: flex;
    flex-direction: column;
    flex: 1;
    min-width: 0;
}
.view {
    display: flex;
    flex: 1;
    min-height: 0;
}
.page {
    display: grid;
    grid-template-columns: 1fr 229px;
    grid-template-rows: auto auto;
    column-gap: 8px;
    row-gap: 5px;
    align-content: start;
    flex: 1;
    overflow: hidden;
    padding: 28px 68px 0 45px;
    border: 1px solid #4a4a4a;
    border-width: 1px 2px 1px 1px;
    background-color: #fff;
    box-shadow: inset 2px 2px 2px #bdbdbd;
    font-family: "Liberation Sans", Arial, sans-serif;
    font-size: 10px;
}
.page-left {
    display: flex;
    flex-direction: column;
}
.agency {
    display: flex;
    gap: 13px;
    font-size: 11px;
    line-height: 11px;
}
.agency p {
    margin-top: -1px;
}
.page h1 {
    margin: 13px 0 auto 51px;
    font-size: 19px;
    line-height: 22px;
}
.page h2 {
    font-size: 10px;
    line-height: 12px;
}
.box {
    margin-left: 1px;
    background-color: #f2f2f2;
}
.field {
    border: 1px solid #222;
    border-radius: 0;
    background-color: #fff;
}
.family {
    display: flex;
    align-items: center;
    justify-content: space-between;
    width: 345px;
    height: 36px;
    margin-bottom: 7px;
    padding: 2px 7px 0 8px;
    line-height: 11px;
    white-space: nowrap;
}
.family .field {
    width: 57px;
    height: 26px;
}
.language {
    position: relative;
    margin-bottom: 1px;
    padding: 3px 7px 5px 8px;
}
.language::before {
    content: "";
    position: absolute;
    left: 0;
    top: 23px;
    width: 1px;
    height: 2px;
    background-color: #000;
}
.choices {
    display: grid;
    grid-template-columns: 95px 81px 73px 1fr;
    align-items: center;
    height: 28px;
    padding-left: 18px;
}
.choices label {
    display: flex;
    align-items: center;
    gap: 4px;
}
.choices input[type="checkbox"] {
    appearance: none;
    width: 16px;
    height: 16px;
    margin: 0;
    border: 1px solid #222;
    background-color: #fff;
}
.other .field {
    flex: 1;
    width: 0;
    height: 25px;
}
.dashes {
    height: 2px;
    margin: 3px 5px 3px 0;
    background-image: repeating-linear-gradient(90deg, #c0c0c0 0 25px, transparent 25px 32px);
}
.page-right {
    text-align: center;
}
.protected {
    font-size: 11px;
    font-weight: bold;
    line-height: 12px;
    text-align: right;
    white-space: nowrap;
}
.page-number {
    margin: 4px 1px;
    line-height: 12px;
    text-align: right;
}
.office {
    height: 65px;
    border: 2px solid #111;
    font-size: 11px;
}
.page .office h2 {
    padding: 1px 0 2px;
    border-bottom: 1px solid #111;
    font-size: 12px;
    line-height: 15px;
}
.office p {
    line-height: 18px;
    white-space: nowrap;
}
.receipt {
    height: 212px;
    margin-top: 8px;
    padding: 0 12px 0 9px;
    border: 1px solid #222;
    font-size: 11px;
}
.receipt p {
    margin-bottom: 9px;
    line-height: 18px;
}
.receipt .field {
    display: block;
    width: 100%;
    height: 30px;
    margin-bottom: 22px;
    padding: 0 2px;
    font-size: 25px;
}
.page-bottom {
    display: flex;
    justify-content: space-between;
    grid-column: 1 / 3;
}
.question {
    width: 347px;
    padding: 4px 10px 0 7px;
}
.question h2 b {
    display: inline-block;
    width: 17px;
}
.question h2 span {
    font-weight: normal;
}
.question label {
    display: flex;
    justify-content: space-between;
    margin: 3px 0 0 20px;
    line-height: 20px;
    white-space: nowrap;
}
.question .field {
    width: 245px;
    height: 26px;
}
.education {
    padding-top: 7px;
}
.education label {
    margin-top: 0;
}
.education .field {
    width: 57px;
}

/* Scrollbar */
.scrollbar {
    display: flex;
    flex-direction: column;
    align-items: center;
    width: 15px;
    flex: none;
    padding: 4px 0 6px;
    background-color: #efefef;
    color: #555;
}
.thumb {
    width: 5px;
    height: 62px;
    margin-top: 5px;
    border-radius: 3px;
    background-color: #8a8a8a;
}
.down {
    margin-top: auto;
}

/* Status bar */
.status {
    display: flex;
    align-items: center;
    height: 30px;
    flex: none;
    padding-left: 2px;
    background-color: #f4f4f4;
}
.handle {
    width: 9px;
    height: 26px;
    flex: none;
    margin-right: 2px;
    color: #444;
}
.handle svg {
    margin-top: 3px;
}
.handle.push {
    margin: 0 4px 0 auto;
}
.handle.end {
    width: 12px;
    height: 28px;
    margin: 0;
    padding: 1px;
    border: 1px solid #c4c4c4;
    background-color: #fff;
}
.status .selected {
    margin: 0 1px;
}
.status .sep {
    margin: 0 2px;
}
.pager {
    display: flex;
    align-items: center;
    gap: 5px;
    margin-right: 1px;
}
.page-box {
    display: flex;
    align-items: center;
    width: 90px;
    height: 23px;
    padding: 0 3px;
    border: 1px solid #b5b5b5;
    border-radius: 3px;
    background-color: #fff;
}
.page-box input {
    flex: 1;
    width: 0;
    padding: 0 2px 0 0;
    border: none;
    outline: none;
    text-align: right;
}
.page-box sup {
    font-size: 9px;
    line-height: 9px;
    margin: 0 2px 4px 1px;
    color: #666;
}
.back {
    margin: 0 3px;
}
.zoom-box {
    display: grid;
    align-items: center;
    width: 82px;
    height: 23px;
    border: 1px solid #b5b5b5;
    border-radius: 3px;
    background-color: #fff;
}
.zoom-box select {
    grid-area: 1 / 1;
    width: 100%;
    height: 21px;
    padding: 0 3px;
    border: none;
    outline: none;
    appearance: none;
    background: none;
}
.zoom-box svg {
    grid-area: 1 / 1;
    justify-self: end;
    margin-right: 3px;
    color: #444;
    pointer-events: none;
}
.minus {
    margin-left: 3px;
}
.zoom {
    appearance: none;
    width: 100px;
    height: 20px;
    flex: none;
    margin: 0 1px 0 5px;
    background: linear-gradient(90deg, #777 50%, #bdbdbd 50%) center / 100% 2px no-repeat;
}
.zoom::-webkit-slider-thumb {
    appearance: none;
    width: 18px;
    height: 18px;
    border: 1px solid #555;
    border-radius: 50%;
    background: radial-gradient(circle, #808080 0 3px, #fff 4px);
}
.to-end {
    width: 12px;
    height: 28px;
    padding: 0 0 14px 2px;
}
```
